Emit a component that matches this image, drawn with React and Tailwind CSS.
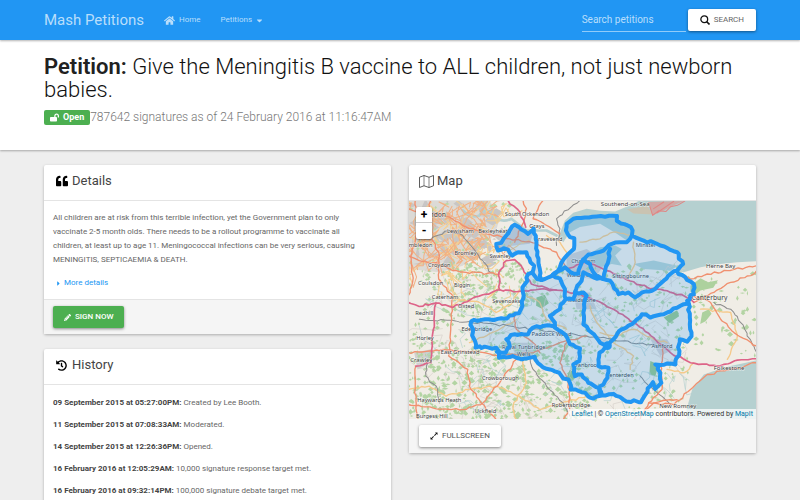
import React from "react";
import { FaHome, FaQuoteLeft, FaHistory, FaLockOpen, FaPencilAlt, FaCaretRight, FaCaretDown } from "react-icons/fa";

/* ---------- map geometry ---------- */

function makeRandom(seed) {
  let s = seed;
  return () => {
    s = (s * 16807) % 2147483647;
    return s / 2147483647;
  };
}

function parse(str) {
  return str.split(" ").map((p) => p.split(",").map(Number));
}

// Splits each leg into short steps and shifts them a little, as a surveyed line has.
function jagged(str, amount, seed) {
  const rnd = makeRandom(seed);
  const pts = parse(str);
  const out = [pts[0]];
  for (let i = 1; i < pts.length; i++) {
    const [x0, y0] = pts[i - 1];
    const [x1, y1] = pts[i];
    const n = Math.max(1, Math.round(Math.hypot(x1 - x0, y1 - y0) / 11));
    for (let k = 1; k < n; k++) {
      out.push([
        Math.round(x0 + ((x1 - x0) * k) / n + (rnd() - 0.5) * amount),
        Math.round(y0 + ((y1 - y0) * k) / n + (rnd() - 0.5) * amount),
      ]);
    }
    out.push([x1, y1]);
  }
  return out.map((p) => p.join(",")).join(" ");
}

const OUTLINE =
  "425,373 412,370 398,350 385,355 383,375 368,395 372,420 368,450 358,472 340,478 322,488 305,487 285,492 245,492 215,497 220,530 228,575 290,575 298,605 330,603 375,607 405,602 415,622 440,638 460,643 485,660 510,680 512,700 545,708 580,727 605,718 640,713 670,730 722,738 758,678 765,698 783,680 780,650 765,625 825,625 837,585 838,550 860,557 873,530 868,485 865,445 860,435 880,415 880,385 845,358 830,345 848,325 830,290 780,270 730,255 695,240 692,215 650,196 650,182";
const COAST = "650,182 590,183 520,190 500,205 498,225 510,245 523,248 522,280 505,295 485,320 475,345 458,360 425,373";
const DARTFORD =
  "425,373 420,340 412,300 408,250 402,220 385,235 365,222 345,208 320,240 305,262 290,265 295,285 312,278 325,282 338,300 355,290 380,290 392,320 403,330 398,350";
const INNER = [
  "458,358 495,335 512,350 535,354 545,320 552,312 570,325 580,350 590,362 610,370",
  "545,320 565,297 610,285 635,265 680,260 695,240",
  "630,280 625,315 612,355 610,370",
  "458,358 480,368 495,400 498,430 520,430 525,410 545,375 550,350 580,365 610,370 630,375 655,415 685,410 705,425 725,410 755,405 790,375 810,355 830,345",
  "525,410 550,410 560,420 552,445 550,505 575,530 600,560 622,570",
  "498,430 490,440 480,460 450,480 465,500 465,515 495,535 510,565 540,577 538,615 520,625 525,660 545,655 565,680 595,695 605,715",
  "465,512 430,510 400,515 385,535 345,535 320,550 330,570 318,590 292,587",
  "865,443 840,450 790,475 750,485 725,475 695,505 665,520 640,550 622,570 598,590 595,630 625,635 622,665 600,690 600,715",
];

const MOTORWAYS = [
  "27,440 60,452 110,442 160,455 215,430 260,415 300,402 350,408 420,400 470,403 530,415 590,435 640,460 700,500 760,545 810,590 870,620 950,630 1010,612 1068,608",
  "110,442 105,500 98,560 95,620 50,630",
  "300,402 298,350 320,315 345,312 370,340 395,385 470,403",
  "500,340 560,320 620,345 680,372 740,395 800,405 850,420 880,440",
  "325,135 360,170 378,215",
];
const TRUNKS = [
  "27,300 60,315 120,325 160,345 200,350 298,355",
  "27,160 90,175 150,185 200,215 260,235 330,250 400,262 470,290 500,335",
  "95,135 80,190 95,245 120,300 118,370 160,420 155,500 148,600 205,640 210,690 245,740 290,790",
  "48,135 60,220 35,300 40,380 27,420",
  "27,590 90,585 140,582 240,588 300,600 400,590 480,560 560,540",
  "50,630 48,700 55,790",
  "350,610 300,680 250,740 190,760 100,755 27,745",
  "500,560 480,620 505,680 510,760 490,790",
  "370,135 380,160 372,200 345,260",
  "430,135 400,190 450,215 480,235",
  "830,345 870,370 920,355 980,345 1068,330",
  "880,440 940,410 990,380 1050,360 1068,345",
  "880,420 930,440 960,490 1000,530 1068,570",
  "1068,620 990,640 920,655 870,700 820,745 760,740 700,790",
  "720,790 745,740 830,730",
  "790,570 780,650 785,700 745,740",
  "345,480 350,520 400,560 420,590",
];
const SECONDARY = [
  "27,700 90,690 140,720 210,700 290,690 360,720 420,760 560,720",
  "600,530 650,540 700,520 760,550 800,560",
  "440,240 480,260 500,290",
  "540,260 600,250 640,230 690,240",
  "700,260 705,320 680,370",
  "570,450 590,500 640,560 700,600 690,640",
  "900,460 990,470 1010,540 980,610",
  "160,430 240,440 290,470 340,440 360,400",
  "380,420 420,440 440,490 500,520",
  "370,610 380,680 340,750 350,790",
  "880,620 850,650 800,640",
  "210,560 260,540 300,520 350,490",
];
const RAILWAYS = [
  "95,250 150,225 190,240 230,290 275,352",
  "60,490 200,498 330,510 470,530 600,545 780,570",
  "380,580 400,640 440,690 490,740 510,780",
  "85,620 80,660 115,700 120,740",
  "940,440 990,460 1020,500 1068,590",
  "720,660 760,700 810,745",
  "470,270 480,220 470,190 540,135",
];
const TOWNS = [
  [104, 184, "London", 20],
  [183, 233, "Lewisham", 17],
  [285, 232, "Bexleyheath", 17],
  [54, 273, "Wimbledon", 17],
  [198, 298, "Bromley", 17],
  [302, 306, "Swanley", 17],
  [120, 333, "Croydon", 17],
  [94, 389, "Coulsdon", 17],
  [188, 393, "Biggin", 16],
  [137, 431, "Caterham", 17],
  [320, 442, "Sevenoaks", 17],
  [382, 182, "South Ockendon", 17],
  [411, 218, "Grays", 17],
  [445, 255, "Gravesend", 17],
  [550, 322, "Chatham", 17],
  [550, 364, "Walderslade", 17],
  [545, 439, "Maidstone", 17],
  [675, 153, "Southend-on-Sea", 18],
  [737, 275, "Minster", 17],
  [691, 368, "Sittingbourne", 17],
  [960, 336, "Herne Bay", 18],
  [927, 434, "Canterbury", 20],
  [75, 476, "Redhill", 17],
  [200, 458, "Oxted", 17],
  [77, 551, "Horley", 17],
  [232, 525, "Edenbridge", 17],
  [455, 540, "Paddock Wood", 17],
  [372, 578, "Royal Tunbridge", 17],
  [372, 600, "Wells", 17],
  [182, 594, "East Grinstead", 17],
  [66, 618, "Crawley", 18],
  [302, 673, "Crowborough", 17],
  [558, 633, "Cranbrook", 17],
  [785, 576, "Ashford", 17],
  [660, 662, "Tenterden", 17],
  [985, 642, "Folkestone", 18],
  [513, 753, "Robertsbridge", 17],
  [832, 754, "New Romney", 18],
  [120, 737, "Haywards Heath", 17],
  [98, 784, "Burgess Hill", 17],
  [258, 771, "Uckfield", 17],
];

function scatter(count, seed, x0, x1, y0, y1, size) {
  const rnd = makeRandom(seed);
  return Array.from({ length: count }, () => {
    const x = Math.round(x0 + rnd() * (x1 - x0));
    const y = Math.round(y0 + rnd() * (y1 - y0));
    const w = 2 + rnd() * size;
    const h = 2 + rnd() * size;
    return `M${x},${y}l${w.toFixed(0)},${(-h).toFixed(0)}l${w.toFixed(0)},${h.toFixed(0)}l${(-w).toFixed(0)},${(h * 0.8).toFixed(0)}z`;
  }).join("");
}

function lanes(count, seed, x0, x1, y0, y1, reach) {
  const rnd = makeRandom(seed);
  return Array.from({ length: count }, () => {
    let d = `M${Math.round(x0 + rnd() * (x1 - x0))},${Math.round(y0 + rnd() * (y1 - y0))}`;
    for (let i = 0; i < 4; i++) {
      d += `l${Math.round((rnd() - 0.5) * reach)},${Math.round((rnd() - 0.5) * reach)}`;
    }
    return d;
  }).join("");
}

const WOODS =
  scatter(640, 77, 27, 860, 330, 790, 6) + scatter(420, 21, 27, 560, 560, 790, 8) + scatter(180, 57, 140, 400, 320, 480, 6) + scatter(60, 9, 850, 1060, 350, 600, 8);
const PARKS = scatter(80, 5, 27, 330, 135, 420, 6);
const SUBURBS = scatter(90, 31, 27, 290, 135, 330, 24);
const CITY_ROADS = lanes(60, 13, 27, 280, 135, 320, 70);
const CITY_STREETS = lanes(55, 44, 27, 330, 135, 400, 60);
const COUNTRY_LANES = lanes(90, 91, 100, 860, 350, 790, 70);
const STREAMS = lanes(55, 63, 60, 860, 400, 780, 60);

function Lines({ items, ...rest }) {
  return items.map((p, i) => <polyline key={i} points={jagged(p, 6, i + 3)} {...rest} />);
}

function MapDrawing() {
  return (
    <svg
      className="block h-full w-full"
      viewBox="27 137 1041 651"
      preserveAspectRatio="xMidYMid slice"
      role="img"
      aria-label="Map of signatures in Kent"
      fill="none"
      strokeLinejoin="round"
      strokeLinecap="round"
    >
      <rect x="0" y="100" width="1100" height="720" fill="#f0ede6" />
      <path d="M27,135H270L300,190L285,240L250,265L190,330L120,350L27,340Z" fill="#dcdad6" />
      <path d={SUBURBS} fill="#c8c6c5" />
      <path d="M300,225l60,-10l40,20l-10,30l-90,10zM500,300l60,-20l60,40l-40,50l-80,-10zM520,410l50,0l20,50l-60,0zM750,550l50,0l20,30l-40,20zM45,590l50,-10l0,40l-40,20zM330,560l70,0l0,40l-50,0z" fill="#d2cfcf" />
      <path d={PARKS} fill="#b9d9a6" />
      <path d={WOODS} fill="#b3d4a3" />
      <path d="M410,425l25,-8l12,25l-22,16l-16,-8zM750,615l25,10l-10,35l-18,-5zM510,640l18,14l-10,20l-20,-4zM790,485l40,-22l6,18l-30,20z" fill="#98c68b" />
      <path d="M870,390l30,-22l22,12l30,-6l-14,22l-38,8l-18,14l-12,-10zM905,470l20,-10l8,14l-18,22l-16,8z" fill="#add19e" />

      <path d="M190,165q25,25 50,15q15,-30 40,0q25,25 55,10l45,35l60,0l30,15" stroke="#b5d0d0" strokeWidth="8" />
      <path
        d="M475,245L495,195L520,172L560,160L600,166L645,168L690,150L715,137L740,130H1080V316L1010,320L950,326L900,335L850,350L830,345L848,325L830,290L780,270L730,255L695,240L680,255L650,235L600,205L540,215L510,230L490,260Z"
        fill="#b5d0d0"
      />
      <path d="M560,300l40,-25l45,-5l20,10l-20,20l20,30l-30,-5l-40,10zM700,325l60,-10l70,15l-20,15l-80,-5z" fill="#b5d0d0" />
      <path d="M1080,610L990,630L940,645L910,655L875,700L858,760L860,800H1080Z" fill="#b5d0d0" />
      <path d="M680,162l60,-10l20,25l-60,-3z" fill="#c9c3b2" />
      <path d="M742,140L850,137L820,150L790,165L757,180Z" fill="#d0a9a7" />
      <path d="M745,142l12,38l18,-14l22,2l14,-14l20,-4l22,-13M760,160l30,-20M770,172l50,-34" stroke="#e08684" strokeWidth="3" />

      <path d={STREAMS} stroke="#b5d0d0" strokeWidth="2" />
      <path d={COUNTRY_LANES} stroke="#d6d0ca" strokeWidth="2" />
      <path d={CITY_STREETS} stroke="#f6cf8f" strokeWidth="3" />
      <path d={CITY_ROADS} stroke="#f2b184" strokeWidth="3" />
      <Lines items={SECONDARY} stroke="#f5c98a" strokeWidth="4" />
      <Lines items={RAILWAYS} stroke="#8d8d8d" strokeWidth="3" />
      <Lines items={TRUNKS} stroke="#f0906f" strokeWidth="4" />
      <Lines items={MOTORWAYS} stroke="#dd6488" strokeWidth="5" />

      <g fontFamily="'Noto Sans', 'Open Sans', sans-serif" textAnchor="middle" fill="#3c3c3c" stroke="#ffffff" strokeOpacity="0.7" strokeWidth="3" paintOrder="stroke">
        {TOWNS.map(([x, y, name, size]) => (
          <text key={name} x={x} y={y} fontSize={size}>
            {name}
          </text>
        ))}
      </g>

      <g fill="#2196f3" fillOpacity="0.2" stroke="none">
        <polygon points={jagged(OUTLINE, 5, 8) + " " + jagged(COAST, 5, 9)} />
        <polygon points={jagged(DARTFORD, 5, 10)} />
      </g>
      <g stroke="#2196f3" strokeWidth="12">
        <polyline points={jagged(OUTLINE, 8, 8)} />
        <polyline points={jagged(COAST, 3, 9)} />
        <polyline points={jagged(DARTFORD, 6, 10)} />
        <Lines items={INNER} />
      </g>
      <circle cx="622" cy="569" r="13" fill="#2196f3" />
    </svg>
  );
}

/* ---------- small icons ---------- */

function SearchIcon() {
  return (
    <svg className="size-[10px]" viewBox="0 0 20 20" fill="none" stroke="#111" strokeWidth="2.6" aria-hidden="true">
      <circle cx="8.5" cy="8.5" r="6.8" />
      <path d="M13.4 13.4L19 19" strokeWidth="3.2" />
    </svg>
  );
}

function FoldedMapIcon() {
  return (
    <svg className="h-[13px] w-[15px]" viewBox="0 0 30 26" fill="none" stroke="#333" strokeWidth="1.6" strokeLinejoin="round" aria-hidden="true">
      <path d="M1 4.5L10 1L20 4.5L29 1V21.5L20 25L10 21.5L1 25Z" />
      <path d="M10 1V21.5M20 4.5V25" strokeWidth="1.2" />
    </svg>
  );
}

function ExpandIcon() {
  return (
    <svg className="size-[8px]" viewBox="0 0 16 16" fill="#111" aria-hidden="true">
      <path d="M10 1H15V6L13.200 4.200L9.500 8L8 6.500L11.800 2.800ZM6 15H1V10L2.800 11.800L6.500 8L8 9.500L4.200 13.200Z" />
    </svg>
  );
}

/* ---------- page parts ---------- */

const CARD = "bg-white rounded-[2px] shadow-[0_1px_3px_rgba(0,0,0,0.28)]";
const RAISED = "flex h-[22px] items-center rounded-[2px] text-[8px] uppercase shadow-[0_1px_3px_rgba(0,0,0,0.45)]";

function CardHeader({ icon, children }) {
  return (
    <h2 className="flex h-9 items-center gap-[3px] border-b border-[#e4e4e4] px-[10px] pb-[3px] text-[13px] text-[#444]">
      <span className="flex min-w-[15px] items-center justify-center text-black">{icon}</span>
      {children}
    </h2>
  );
}

const HISTORY = [
  ["09 September 2015 at 05:27:00PM:", "Created by Lee Booth."],
  ["11 September 2015 at 07:08:33AM:", "Moderated."],
  ["14 September 2015 at 12:26:36PM:", "Opened."],
  ["16 February 2016 at 12:05:29AM:", "10,000 signature response target met."],
  ["16 February 2016 at 09:32:14PM:", "100,000 signature debate target met."],
];

function NavBar() {
  return (
    <nav className="relative h-10 bg-[#2196f3] shadow-[0_1px_2px_rgba(0,0,0,0.3)]">
      <div className="mx-auto flex h-full max-w-[712px] items-center text-[8px] text-[#b9defb]">
        <a href="#top" className="text-[15px]">Mash Petitions</a>
        <a href="#home" className="ml-5 flex items-center gap-1">
          <FaHome className="size-[11px]" aria-hidden="true" />
          Home
        </a>
        <button type="button" className="ml-5 flex items-center gap-[3px]">
          Petitions
          <FaCaretDown className="size-[9px]" aria-hidden="true" />
        </button>
        <form className="ml-auto flex items-center gap-[2px]" onSubmit={(e) => e.preventDefault()}>
          <input
            type="text"
            aria-label="Search petitions"
            placeholder="Search petitions"
            className="h-6 w-[104px] border-b border-[#90cbf9] bg-transparent text-[10px] outline-none placeholder:text-[#b9defb]"
          />
          <button type="submit" className={`${RAISED} gap-1 bg-white px-[12px] text-[#666]`}>
            <SearchIcon />
            Search
          </button>
        </form>
      </div>
    </nav>
  );
}

export default function App() {
  return (
    <div className="h-screen overflow-hidden bg-[#eeeeee] font-['Roboto',sans-serif] text-[8px] text-[#666]">
      <NavBar />
      <header className="h-[110px] bg-white pt-[15px] shadow-[0_1px_2px_rgba(0,0,0,0.3)]">
        <div className="mx-auto max-w-[712px]">
          <h1 className="text-[22px] leading-[23px] font-light text-[#111]">
            <strong className="font-semibold text-[#212121]">Petition:</strong> Give the Meningitis B vaccine to ALL children, not just newborn babies.
          </h1>
          <p className="mt-[7px] flex items-center text-[12px] leading-[18px] font-light text-[#777]">
            <span className="flex h-[15px] items-center gap-1 rounded-[2px] bg-[#4caf50] px-[6px] text-[9px] font-bold text-white">
              <FaLockOpen className="size-[9px]" aria-hidden="true" />
              Open
            </span>
            787642 signatures as of 24 February 2016 at 11:16:47AM
          </p>
        </div>
      </header>

      <main className="mx-auto grid max-w-[712px] grid-cols-2 items-start gap-[18px] pt-[15px]">
        <div className="flex flex-col gap-[15px]">
          <section className={CARD}>
            <CardHeader icon={<FaQuoteLeft className="size-[12px]" />}>Details</CardHeader>
            <div className="pt-[10px] pr-7 pb-[9px] pl-[9px] leading-[14px]">
              <p>
                All children are at risk from this terrible infection, yet the Government plan to only vaccinate 2-5 month olds. There needs to be a rollout programme to vaccinate all children, at least up to age 11. Meningococcal infections can be very serious, causing MENINGITIS, SEPTICAEMIA &amp; DEATH.
              </p>
              <a href="#more" className="mt-[9px] ml-[2px] flex items-center gap-[2px] text-[#2196f3]">
                <FaCaretRight className="size-[7px]" aria-hidden="true" />
                More details
              </a>
            </div>
            <div className="border-t border-[#e4e4e4] bg-[#f5f5f5] px-[9px] py-[6px]">
              <button type="button" className={`${RAISED} gap-1 bg-[#4caf50] px-[11px] font-medium text-white`}>
                <FaPencilAlt className="size-[7px]" aria-hidden="true" />
                Sign now
              </button>
            </div>
          </section>

          <section className={CARD}>
            <CardHeader icon={<FaHistory className="size-[11px]" />}>History</CardHeader>
            <ul className="flex flex-col gap-2 px-[9px] py-[11px] leading-[14px]">
              {HISTORY.map(([when, what]) => (
                <li key={when}>
                  <strong className="font-bold text-[#444]">{when}</strong> {what}
                </li>
              ))}
            </ul>
          </section>
        </div>

        <section className={CARD}>
          <CardHeader icon={<FoldedMapIcon />}>Map</CardHeader>
          <div className="relative h-[218px] overflow-hidden">
            <MapDrawing />
            <div className="absolute top-[6px] left-[7px] flex w-4 flex-col overflow-hidden rounded-[2px] bg-white text-[12px] leading-none font-bold text-black shadow-[0_1px_2px_rgba(0,0,0,0.5)]">
              <button type="button" aria-label="Zoom in" className="h-4 border-b border-[#ccc]">+</button>
              <button type="button" aria-label="Zoom out" className="h-4">-</button>
            </div>
            <div className="absolute right-0 bottom-0 bg-white/75 px-[3px] text-[7px] leading-[10px] text-[#333]">
              <a href="#leaflet" className="text-[#0078a8]">Leaflet</a> | © <a href="#osm" className="text-[#0078a8]">OpenStreetMap</a> contributors. Powered by{" "}
              <a href="#mapit" className="text-[#0078a8]">MapIt</a>
            </div>
          </div>
          <div className="bg-[#f5f5f5] px-[10px] py-[6px]">
            <button type="button" className={`${RAISED} gap-1 bg-white px-[11px] text-[#555]`}>
              <ExpandIcon />
              Fullscreen
            </button>
          </div>
        </section>
      </main>
    </div>
  );
}
